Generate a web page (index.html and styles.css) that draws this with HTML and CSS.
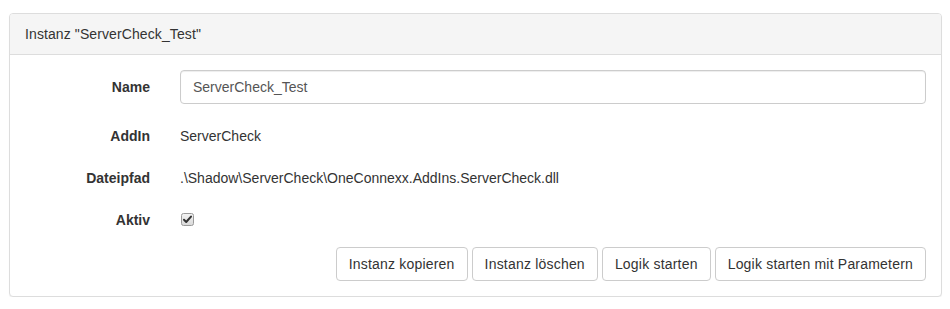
FILE: index.html
```html
<!DOCTYPE html>
<html lang="de">
<head>
    <meta charset="UTF-8">
    <title>Instanz ServerCheck_Test</title>
    <link rel="stylesheet" href="styles.css">
</head>
<body>
    <div class="page">
        <div class="panel">
            <div class="panel-heading">Instanz "ServerCheck_Test"</div>
            <div class="panel-body">
                <div class="form-row form-row-input">
                    <label class="control-label" for="name">Name</label>
                    <input class="form-control" id="name" type="text" value="ServerCheck_Test">
                </div>
                <div class="form-row">
                    <span class="control-label">AddIn</span>
                    <span class="form-static">ServerCheck</span>
                </div>
                <div class="form-row">
                    <span class="control-label">Dateipfad</span>
                    <span class="form-static">.\Shadow\ServerCheck\OneConnexx.AddIns.ServerCheck.dll</span>
                </div>
                <div class="form-row">
                    <span class="control-label">Aktiv</span>
                    <span class="form-static">
                        <span class="check-box">
                            <svg width="13" height="13" viewBox="0 0 13 13">
                                <defs>
                                    <linearGradient id="cbg" x1="0" y1="0" x2="0" y2="1">
                                        <stop offset="0" stop-color="#f4f4f4"/>
                                        <stop offset="1" stop-color="#d8d8d8"/>
                                    </linearGradient>
                                </defs>
                                <rect x="0.5" y="0.5" width="12" height="12" rx="2" fill="url(#cbg)" stroke="#9a9a9a"/>
                                <path d="M3 6.8 L5.2 9 L10 3.6" fill="none" stroke="#333" stroke-width="2" stroke-linecap="round" stroke-linejoin="round"/>
                            </svg>
                        </span>
                    </span>
                </div>
                <div class="button-row">
                    <button class="btn">Instanz kopieren</button>
                    <button class="btn">Instanz löschen</button>
                    <button class="btn">Logik starten</button>
                    <button class="btn">Logik starten mit Parametern</button>
                </div>
            </div>
        </div>
    </div>
</body>
</html>
```

FILE: styles.css
```css
body {
    margin: 0;
    background-color: #fff;
    font-family: "Liberation Sans", Arial, sans-serif;
    font-size: 14px;
    line-height: 20px;
    color: #333;
}

.page {
    padding: 13px 8px 0 9px;
}

.panel {
    border: 1px solid #ddd;
    border-radius: 4px;
    background-color: #fff;
    box-shadow: 0 1px 1px rgba(0, 0, 0, 0.05);
}

.panel-heading {
    padding: 10px 15px;
    background-color: #f5f5f5;
    border-bottom: 1px solid #ddd;
    border-radius: 3px 3px 0 0;
    letter-spacing: 0.1px;
}

.panel-body {
    padding: 15px;
}

.form-row {
    display: grid;
    grid-template-columns: 125px 1fr;
    column-gap: 30px;
    margin-bottom: 15px;
}

.control-label {
    padding-top: 7px;
    text-align: right;
    font-weight: bold;
}

.form-static {
    padding-top: 7px;
}

.form-control {
    display: block;
    width: 100%;
    height: 34px;
    box-sizing: border-box;
    padding: 6px 12px;
    font-family: inherit;
    font-size: 14px;
    line-height: 20px;
    color: #555;
    background-color: #fff;
    border: 1px solid #ccc;
    border-radius: 4px;
    box-shadow: inset 0 1px 1px rgba(0, 0, 0, 0.075);
    margin: 0;
}

.check-box {
    display: block;
    width: 13px;
    height: 13px;
    margin: 3px 0 0 1px;
}

.check-box svg {
    display: block;
}

.button-row {
    display: flex;
    justify-content: flex-end;
    gap: 4px;
    margin-top: 17px;
}

.btn {
    height: 34px;
    padding: 6px 12px;
    font-family: inherit;
    font-size: 14px;
    line-height: 20px;
    letter-spacing: 0.2px;
    color: #333;
    background-color: #fff;
    border: 1px solid #ccc;
    border-radius: 4px;
    cursor: pointer;
}
```
